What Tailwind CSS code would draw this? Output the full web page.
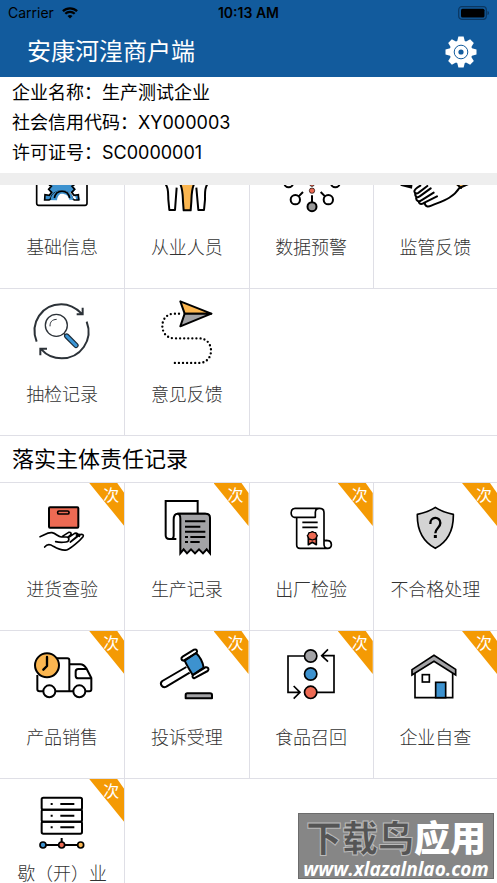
<!DOCTYPE html>
<html lang="zh-CN">
<head>
<meta charset="utf-8">
<meta name="viewport" content="width=device-width, initial-scale=1">
<title>安康河湟商户端</title>
<script src="https://cdn.jsdelivr.net/npm/@tailwindcss/browser@4"></script>
</head>
<body class="bg-white font-['Inter','Noto_Sans_CJK_SC',sans-serif] text-black">
<div class="relative flex h-screen flex-col overflow-hidden">

  <header class="shrink-0 bg-[#125b9d]">
    <div class="grid h-[26px] grid-cols-3 items-center px-2 text-sm">
      <div class="flex items-center gap-2">
        <span>Carrier</span>
        <svg class="h-3 w-4" viewBox="0 0 16 12" aria-hidden="true">
          <path d="M8 11.6 5.5 9.1a3.6 3.6 0 0 1 5 0z"/>
          <path d="M3.3 6.8a6.7 6.7 0 0 1 9.4 0M.9 4.2a10.2 10.2 0 0 1 14.2 0" fill="none" stroke="#000" stroke-width="2.3"/>
        </svg>
      </div>
      <span class="text-center text-sm font-semibold">10:13 AM</span>
      <svg class="h-[14px] w-8 justify-self-end" viewBox="0 0 32 14" aria-hidden="true">
        <rect x="1.700" y=".7" width="27.6" height="12.6" rx="3" fill="none" stroke="#0b3761" stroke-width="1.2"/>
        <rect x="4" y="2.7" width="23.5" height="8.8" rx="1.5"/>
        <path d="M30.500 5v4c2-.8 2-3.200 0-4z" fill="#0b3761"/>
      </svg>
    </div>
    <div class="flex h-[51px] items-center justify-between pr-5 pl-[27px]">
      <h1 class="text-2xl text-white">安康河湟商户端</h1>
      <button type="button" aria-label="设置" class="block">
        <svg class="h-8 w-8" viewBox="-16 -16 32 32" aria-hidden="true">
          <g fill="#fff">
            <circle r="11.500"/>
            <path id="tooth" d="M-4-10-2.600-15.500h5.200L4-10V10L2.600 15.500h-5.200L-4 10z"/>
            <use href="#tooth" transform="rotate(45)"/>
            <use href="#tooth" transform="rotate(90)"/>
            <use href="#tooth" transform="rotate(135)"/>
          </g>
          <circle r="6.800" fill="none" stroke="#125b9d" stroke-width="1"/>
          <circle r="2.600" fill="#125b9d"/>
        </svg>
      </button>
    </div>
  </header>

  <section class="shrink-0 border-b-[12px] border-[#eee] px-3 pt-px pb-[5px] text-lg leading-[30px]">
    <p>企业名称：生产测试企业</p>
    <p>社会信用代码：XY000003</p>
    <p>许可证号：SC0000001</p>
  </section>

  <main class="min-h-0 flex-1 overflow-hidden">
    <nav aria-label="基础功能" class="-mt-[43px] grid auto-rows-[147px] grid-cols-4 text-lg leading-[22px] font-light text-[#333]">
      <a href="#" class="flex flex-col items-center border-b border-[#dfdfe6] pt-[11px]">
        <svg class="h-16 w-16" viewBox="90 -36 192 192" fill="none" stroke="#000" stroke-width="5" aria-hidden="true">
          <rect x="110" y="0" width="151" height="121" rx="6"/>
          <path d="M134 105l3-16 10 2 6-8-8-10 8-10V40h66v23l8 10-8 10 6 8 10-2 6 16-12 1c-3-34-55-34-58 0z" fill="#3d92cf" stroke="none"/>
          <path d="M147 60l7 4-8 9 9 9-7 9-13-2-1 16h13l5-3c6-32 60-32 66 0l5 3h13l-1-16-13 2-7-9 9-9-8-9 7-4"/>
          <path d="M152 104c3-38 65-38 68 0h-12c-4-24-40-24-44 0z" fill="#3d92cf" stroke="none"/>
          <path d="M163 99c5-27 41-27 46 0"/>
        </svg>
        <span class="flex h-[62px] items-center">基础信息</span>
      </a>
      <a href="#" class="flex flex-col items-center border-b border-l border-[#dfdfe6] pt-[11px]">
        <svg class="h-16 w-16" viewBox="462 -36 192 192" fill="none" stroke="#000" stroke-width="6" stroke-linejoin="round" aria-hidden="true">
          <path d="M488 50c16 17 13 35 14 54l3 31h17l5-67M624 50c-14 17-12 35-12 54l-3 31h-17l-6-67"/>
          <path d="M534 50c12 17 11 42 12 60l2 26h21l2-26c1-18 0-43 12-60z" fill="#fbb650"/>
        </svg>
        <span class="flex h-[62px] items-center">从业人员</span>
      </a>
      <a href="#" class="flex flex-col items-center border-b border-l border-[#dfdfe6] pt-[11px]">
        <svg class="h-16 w-16" viewBox="93 -36 192 192" fill="none" stroke="#000" stroke-width="6" aria-hidden="true">
          <circle cx="122" cy="54" r="13"/><circle cx="262" cy="54" r="13"/>
          <circle cx="142" cy="104" r="14"/><circle cx="241" cy="104" r="14"/>
          <circle cx="192" cy="125" r="13.500" fill="#999"/>
          <path d="M152 94l13-13M231 94l-13-13M192 111V91M192 50v14"/>
          <circle cx="192" cy="77" r="8" fill="#ed6a53" stroke-width="2"/>
          <circle cx="192" cy="57" r="7" fill="#ed6a53" stroke-width="2"/>
        </svg>
        <span class="flex h-[62px] items-center">数据预警</span>
      </a>
      <a href="#" class="flex flex-col items-center border-b border-l border-[#dfdfe6] pt-[11px]">
        <svg class="h-16 w-16 overflow-visible" viewBox="468 -36 192 192" fill="none" stroke="#000" stroke-width="6" stroke-linecap="round" stroke-linejoin="round" aria-hidden="true">
          <path d="M460 62l35 9 2-18-28-5z" fill="#000" stroke="none"/>
          <path d="M627 60l15 10 22-12V48h-32z" fill="#fbb650" stroke="none"/>
          <path d="M520 62c-10 6-18 11-18 17s9 9 14 3l25-19M504 83c0 11 6 18 14 11l33-24M508 96c-3 11 8 16 15 10l37-23M515 109c2 11 12 9 19 3l36-18M533 114c3 14 13 11 20 8 30-13 64-21 84-53l25-11"/>
          <path d="M630 58l12 11"/>
        </svg>
        <span class="flex h-[62px] items-center">监管反馈</span>
      </a>
      <a href="#" class="flex flex-col items-center border-b border-[#dfdfe6] pt-[11px]">
        <svg class="h-16 w-16" viewBox="90 45 192 192" fill="none" stroke="#2c3238" stroke-width="6" aria-hidden="true">
          <path d="M110 170C88 113 126 58 184 58c26 0 44 11 61 28M230 88h18V68M260 110c21 56-19 110-75 110-25 0-45-9-61-27M121 211v-20h20"/>
          <circle cx="169" cy="121" r="33" stroke-width="4"/>
          <path d="M150 124c0-14 6-20 20-21" stroke-width="3"/>
          <path d="M191 145l7 7" stroke-width="4"/>
          <path d="M200 153l28 28" stroke="#1d2b38" stroke-width="16" stroke-linecap="round"/>
          <path d="M200 153l28 28" stroke="#3b96d6" stroke-width="9" stroke-linecap="round"/>
        </svg>
        <span class="flex h-[62px] items-center">抽检记录</span>
      </a>
      <a href="#" class="flex flex-col items-center border-b border-l border-[#dfdfe6] pt-[11px]">
        <svg class="h-16 w-16" viewBox="462 42 192 192" fill="none" stroke="#000" stroke-width="6" stroke-linejoin="round" aria-hidden="true">
          <path d="M534 83h-14c-48 0-48 74 0 74h74c48 0 48 74 0 74h-78" stroke-width="7" stroke-linecap="round" stroke-dasharray="0 12.200"/>
          <path d="M538 46l93 37h-80z" fill="#fbb650"/>
          <path d="M538 121l93-38h-80z" fill="#a3a3a6"/>
        </svg>
        <span class="flex h-[62px] items-center">意见反馈</span>
      </a>
      <div class="col-span-2 border-b border-l border-[#dfdfe6]"></div>
    </nav>

    <h2 class="flex h-[47px] items-center border-b border-[#dfdfe6] px-3 text-[22px]">落实主体责任记录</h2>

    <nav aria-label="落实主体责任记录" class="grid auto-rows-[148px] grid-cols-4 text-lg leading-[22px] font-light text-[#333]">
      <a href="#" class="relative flex flex-col items-center border-b border-[#dfdfe6] pt-3">
        <svg class="h-16 w-16" viewBox="90 60 192 192" fill="none" stroke="#000" stroke-width="5" stroke-linecap="round" stroke-linejoin="round" aria-hidden="true">
          <rect x="147" y="97" width="88" height="61" rx="3" fill="#ed6a53" stroke-width="6"/>
          <rect x="173" y="108" width="34" height="9" rx="4"/>
          <path d="M120 185c13-5 24-14 36-12 13 2 17 13 28 13h16c10 2 8 14-2 15-11 2-20 2-31-1M134 216c8-10 17-8 26-2 12 7 25 14 40 11 12-5 39-27 49-40 4-7-5-9-12-4l-26 20M187 184l19-12c7-1 9 4 6 8l-7 6M206 187l18-12c8-2 12 3 7 9l-18 15M229 180c5-5 13-2 9 4"/>
        </svg>
        <span class="flex h-[62px] items-center">进货查验</span>
        <span class="absolute top-0 right-0 h-[43px] w-[35px] bg-[#f49a04] pt-px pl-[14px] text-base leading-[22px] font-normal text-white [clip-path:polygon(0_0,28px_0,100%_10px,100%_100%)]">次</span>
      </a>
      <a href="#" class="relative flex flex-col items-center border-b border-l border-[#dfdfe6] pt-3">
        <svg class="h-16 w-16" viewBox="462 60 192 192" fill="none" stroke="#000" stroke-width="6" aria-hidden="true">
          <path d="M590 115V78h-96v103c0 9 5 11 11 11h21M513 192c6-2 5-8 5-15v-43c0-12 4-18 12-18h84"/>
          <path d="M538 235V131c0-9-2-15-9-15h85c9 0 13 5 13 12v107l-10-12-11 12-12-12-12 12-12-12-12 12-10-12z" fill="#a3a3a6"/>
          <path d="M552 139h61M552 155h46M552 170h61M552 186h9M568 186h45M552 201h9M568 201h28"/>
        </svg>
        <span class="flex h-[62px] items-center">生产记录</span>
        <span class="absolute top-0 right-0 h-[43px] w-[35px] bg-[#f49a04] pt-px pl-[14px] text-base leading-[22px] font-normal text-white [clip-path:polygon(0_0,28px_0,100%_10px,100%_100%)]">次</span>
      </a>
      <a href="#" class="relative flex flex-col items-center border-b border-l border-[#dfdfe6] pt-3">
        <svg class="h-16 w-16" viewBox="93 60 192 192" fill="none" stroke="#000" stroke-width="5" stroke-linejoin="round" aria-hidden="true">
          <path d="M146 127v83c0 7 4 10 10 10h85c13 0 12-23-2-23h-11v-84c0-8-5-13-12-13h-75c-15 0-15 27-2 27h63v-15c0-16 26-16 26 0M228 197v11c0 16 23 16 22 0-1-11-11-14-22-11"/>
          <path d="M163 142h46M163 157h46"/>
          <path d="M181 186v23l12-7 12 7v-23z" fill="#ed6a53"/>
          <path d="M193 170l5 2 5 1 2 5 3 4-3 5-2 5-5 1-5 2-5-2-5-1-2-5-3-5 3-4 2-5 5-1z" fill="#ed6a53" stroke-width="4"/>
        </svg>
        <span class="flex h-[62px] items-center">出厂检验</span>
        <span class="absolute top-0 right-0 h-[43px] w-[35px] bg-[#f49a04] pt-px pl-[14px] text-base leading-[22px] font-normal text-white [clip-path:polygon(0_0,28px_0,100%_10px,100%_100%)]">次</span>
      </a>
      <a href="#" class="relative flex flex-col items-center border-b border-l border-[#dfdfe6] pt-3">
        <svg class="h-16 w-16" viewBox="468 60 192 192" fill="none" stroke="#000" stroke-width="5" stroke-linejoin="round" aria-hidden="true">
          <path d="M565 97c16 11 34 17 54 21 1 44-14 80-54 102-40-22-55-58-54-102 20-4 38-10 54-21z" fill="#d4d4d4"/>
          <path d="M550 147c-1-24 30-24 30-3 0 15-15 15-15 31" stroke-width="7"/>
          <path d="M565 180v9" stroke-width="9"/>
        </svg>
        <span class="flex h-[62px] items-center">不合格处理</span>
        <span class="absolute top-0 right-0 h-[43px] w-[35px] bg-[#f49a04] pt-px pl-[14px] text-base leading-[22px] font-normal text-white [clip-path:polygon(0_0,28px_0,100%_10px,100%_100%)]">次</span>
      </a>
      <a href="#" class="relative flex flex-col items-center border-b border-[#dfdfe6] pt-3">
        <svg class="h-16 w-16" viewBox="90 54 192 192" fill="none" stroke="#000" stroke-width="6" stroke-linejoin="round" aria-hidden="true">
          <path d="M112 150v43c0 4 3 6 7 6h10M167 199h52M257 199h11c4 0 6-3 6-6v-34l-15-29c-6-9-10-12-18-12h-33M170 100h32c4 0 6 3 6 6v93"/>
          <path d="M260 132h-25c-5 0-8 3-8 8v12c0 5 3 8 8 8h39"/>
          <circle cx="148" cy="199" r="18" fill="#fff"/><circle cx="238" cy="199" r="18" fill="#fff"/>
          <circle cx="141" cy="121" r="36" fill="#fbb650"/>
          <path d="M141 96v27l-11 11" stroke-linecap="round" stroke-width="7"/>
        </svg>
        <span class="flex h-[62px] items-center">产品销售</span>
        <span class="absolute top-0 right-0 h-[43px] w-[35px] bg-[#f49a04] pt-px pl-[14px] text-base leading-[22px] font-normal text-white [clip-path:polygon(0_0,28px_0,100%_10px,100%_100%)]">次</span>
      </a>
      <a href="#" class="relative flex flex-col items-center border-b border-l border-[#dfdfe6] pt-3">
        <svg class="h-16 w-16" viewBox="462 54 192 192" fill="none" stroke="#000" stroke-width="6" stroke-linejoin="round" aria-hidden="true">
          <path d="M556 126l-72 42c-10 8 0 23 12 17l70-42"/>
          <path d="M551 107l34-23c12 11 20 26 23 44l-33 22c-9-16-16-25-24-43z" fill="#3d92cf"/>
          <path d="M548 107c-8-1-9-8-3-12l34-21c8-3 12 5 7 10zM579 160c-6-2-6-9 0-12l34-21c9-2 12 6 7 11z"/>
          <path d="M554 220v-10c0-3 2-5 5-5h68c4 0 6 2 6 5v10z" fill="#a3a3a6"/>
        </svg>
        <span class="flex h-[62px] items-center">投诉受理</span>
        <span class="absolute top-0 right-0 h-[43px] w-[35px] bg-[#f49a04] pt-px pl-[14px] text-base leading-[22px] font-normal text-white [clip-path:polygon(0_0,28px_0,100%_10px,100%_100%)]">次</span>
      </a>
      <a href="#" class="relative flex flex-col items-center border-b border-l border-[#dfdfe6] pt-3">
        <svg class="h-16 w-16" viewBox="93 54 192 192" fill="none" stroke="#000" stroke-width="5" aria-hidden="true">
          <path d="M169 93h-49v109h36M137 183l19 19-19 19M207 202h51V92h-37M240 73l-19 19 19 18"/>
          <circle cx="188" cy="93" r="18.500" fill="#a3a3a6"/>
          <circle cx="188" cy="147" r="18.500" fill="#3d92cf"/>
          <circle cx="188" cy="202" r="18.500" fill="#ed6a53"/>
        </svg>
        <span class="flex h-[62px] items-center">食品召回</span>
        <span class="absolute top-0 right-0 h-[43px] w-[35px] bg-[#f49a04] pt-px pl-[14px] text-base leading-[22px] font-normal text-white [clip-path:polygon(0_0,28px_0,100%_10px,100%_100%)]">次</span>
      </a>
      <a href="#" class="relative flex flex-col items-center border-b border-l border-[#dfdfe6] pt-3">
        <svg class="h-16 w-16" viewBox="468 54 192 192" fill="none" stroke="#000" stroke-width="5" aria-hidden="true">
          <path d="M504 140v78h113v-78"/>
          <path d="M495 134l66-43 65 42v17l-65-41-66 41z" fill="#a3a3a6"/>
          <rect x="526" y="149" width="21" height="22"/>
          <rect x="566" y="172" width="30" height="46" fill="#3d92cf"/>
        </svg>
        <span class="flex h-[62px] items-center">企业自查</span>
        <span class="absolute top-0 right-0 h-[43px] w-[35px] bg-[#f49a04] pt-px pl-[14px] text-base leading-[22px] font-normal text-white [clip-path:polygon(0_0,28px_0,100%_10px,100%_100%)]">次</span>
      </a>
      <a href="#" class="relative flex flex-col items-center border-b border-[#dfdfe6] pt-3">
        <svg class="h-16 w-16" viewBox="90 63 192 192" fill="none" stroke="#000" stroke-width="6" aria-hidden="true">
          <rect x="125" y="83" width="121" height="36" rx="5"/>
          <rect x="125" y="119" width="121" height="36" rx="5"/>
          <rect x="125" y="155" width="121" height="36" rx="5"/>
          <path d="M152 102h6M152 137h6M152 172h6M181 102h42M181 137h42M181 172h42M185 204v12M129 225h113"/>
          <g stroke-width="5">
            <circle cx="129" cy="225" r="9" fill="#3d92cf"/>
            <circle cx="185" cy="225" r="9" fill="#ed6a53"/>
            <circle cx="242" cy="225" r="9" fill="#fbb650"/>
          </g>
        </svg>
        <span class="pt-2">歇（开）业</span>
        <span class="absolute top-0 right-0 h-[43px] w-[35px] bg-[#f49a04] pt-px pl-[14px] text-base leading-[22px] font-normal text-white [clip-path:polygon(0_0,28px_0,100%_10px,100%_100%)]">次</span>
      </a>
      <div class="col-span-3 border-b border-l border-[#dfdfe6]"></div>
    </nav>
  </main>

  <div class="absolute right-[3px] bottom-1 flex h-[66px] w-[196px] flex-col items-center border border-[#6c6c6c] bg-[#868686] pt-2 whitespace-nowrap text-white">
    <span class="text-[36px] leading-[34px] font-black"><span class="text-[#555] [-webkit-text-stroke:1px_#bbb]">下载鸟</span>应用</span>
    <span class="font-['Open_Sans',sans-serif] text-[19px] leading-[26px] font-bold italic">www.xlazalnlao.com</span>
  </div>
</div>
</body>
</html>
